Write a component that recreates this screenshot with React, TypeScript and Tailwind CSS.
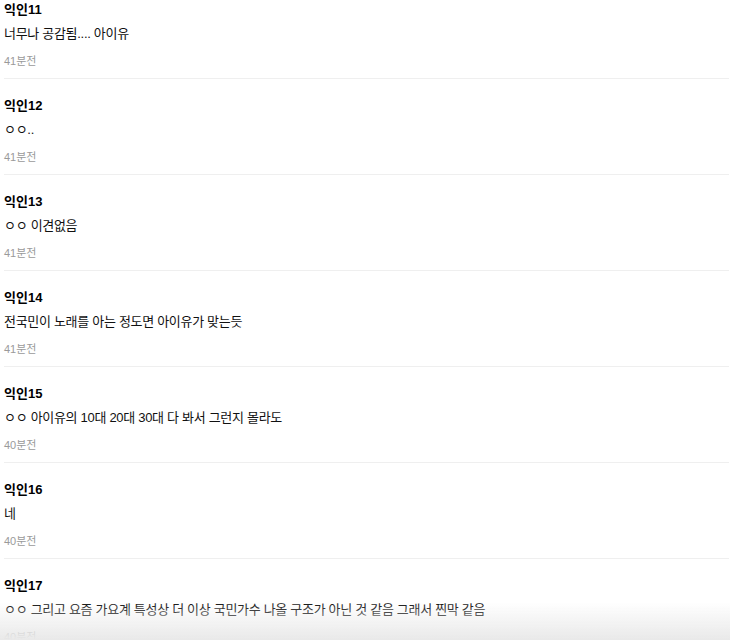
import React from "react";

const items = [
  { n: "익인11", t: "너무나 공감됨.... 아이유", time: "41분전" },
  { n: "익인12", t: "ㅇㅇ..", time: "41분전" },
  { n: "익인13", t: "ㅇㅇ 이견없음", time: "41분전" },
  { n: "익인14", t: "전국민이 노래를 아는 정도면 아이유가 맞는듯", time: "41분전" },
  { n: "익인15", t: "ㅇㅇ 아이유의 10대 20대 30대 다 봐서 그런지 몰라도", time: "40분전" },
  { n: "익인16", t: "네", time: "40분전" },
  { n: "익인17", t: "ㅇㅇ 그리고 요즘 가요계 특성상 더 이상 국민가수 나올 구조가 아닌 것 같음 그래서 찐막 같음", time: "40분전" },
];

export default function App() {
  return (
    <div
      className="relative min-h-[640px] bg-white pl-[4px] pr-[1px]"
      style={{ fontFamily: '"Liberation Sans", "Noto Sans CJK KR", sans-serif' }}
    >
      {items.map((it, i) => (
        <div key={i} className="border-b border-[#efefef] pb-[9px] pt-[17px] first:pt-0">
          <div className="h-[20px] text-[13px] font-bold leading-[20px] text-black">{it.n}</div>
          <div className="mt-[4px] h-[20px] text-[13px] tracking-[-0.3px] leading-[20px] text-[#111]">{it.t}</div>
          <div className="mt-[9px] h-[16px] text-[11px] leading-[16px] text-[#9a9a9a]">{it.time}</div>
        </div>
      ))}
      <div className="pointer-events-none fixed bottom-0 left-0 right-0 h-[38px] bg-gradient-to-b from-white/0 to-[#e9e9e9]" />
    </div>
  );
}
